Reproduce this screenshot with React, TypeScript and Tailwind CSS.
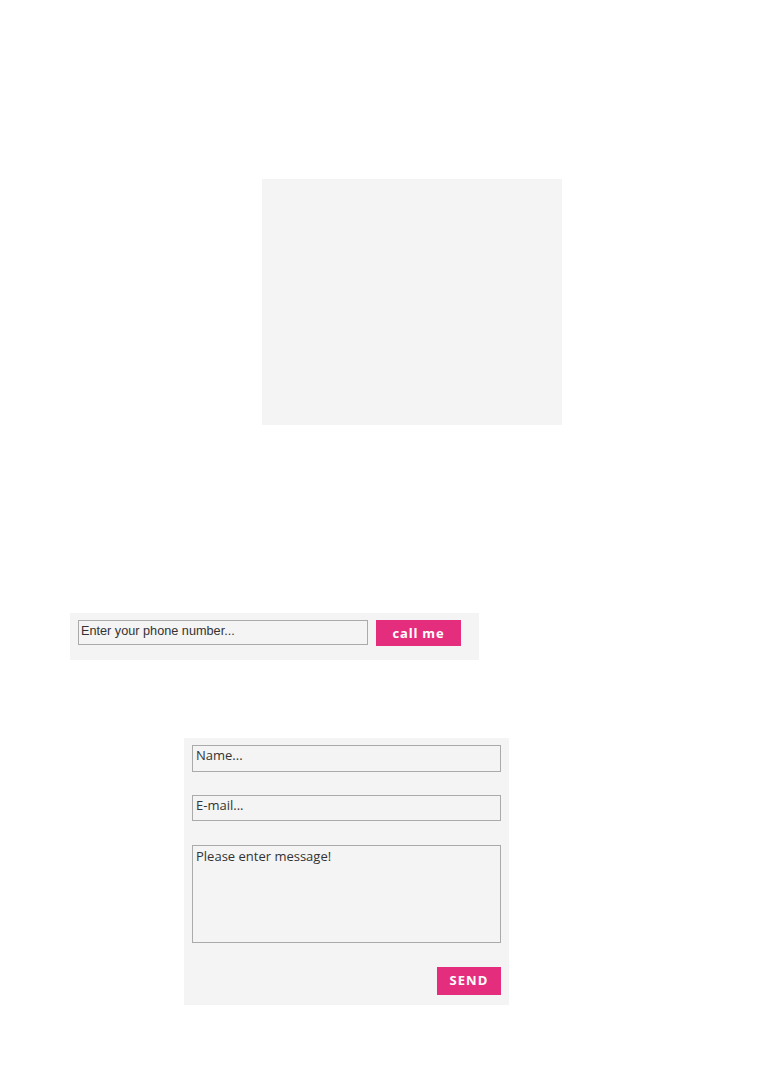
import React from 'react';

const App: React.FC = () => {
  return (
    <div className="min-h-[1074px] w-[759px] bg-white font-['Open_Sans','Liberation_Sans',sans-serif] text-[13px] text-[#333]">
      {/* placeholder block */}
      <div className="pt-[179px]">
        <div className="ml-[262px] h-[246px] w-[300px] bg-[#f4f4f4]" />
      </div>

      {/* call-me bar */}
      <div className="ml-[70px] mt-[188px] flex h-[47px] w-[409px] items-start gap-2 bg-[#f4f4f4] px-2 pt-[7px]">
        <input
          type="text"
          placeholder="Enter your phone number..."
          className="h-[25px] w-[290px] border border-[#aaa] bg-[#f4f4f4] px-[2px] pb-[3px] font-['Liberation_Sans',sans-serif] text-[12.7px] placeholder:text-[#333] outline-none"
        />
        <button className="h-[26px] w-[85px] bg-[#e52d7e] pt-[1px] text-[13px] font-bold tracking-[0.06em] text-white">
          call me
        </button>
      </div>

      {/* contact form */}
      <form className="ml-[184px] mt-[78px] flex w-[325px] flex-col bg-[#f4f4f4] px-2 pt-[7px] pb-[10px]">
        <input
          type="text"
          placeholder="Name..."
          className="h-[27px] w-full border border-[#aaa] bg-[#f4f4f4] px-[3px] pb-[7px] text-[13px] placeholder:text-[#333] outline-none"
        />
        <input
          type="email"
          placeholder="E-mail..."
          className="mt-[23px] h-[26px] w-full border border-[#aaa] bg-[#f4f4f4] px-[3px] pb-[7px] text-[13px] placeholder:text-[#333] outline-none"
        />
        <textarea
          placeholder="Please enter message!"
          className="mt-[24px] h-[98px] w-full resize-none border border-[#aaa] bg-[#f4f4f4] px-[3px] pt-[1px] text-[13px] leading-[18px] placeholder:text-[#333] outline-none"
        />
        <div className="mt-[24px] flex justify-end">
          <button
            type="button"
            className="h-[28px] w-[64px] bg-[#e52d7e] text-[13px] font-bold tracking-[0.08em] text-white"
          >
            SEND
          </button>
        </div>
      </form>
    </div>
  );
};

export default App;
